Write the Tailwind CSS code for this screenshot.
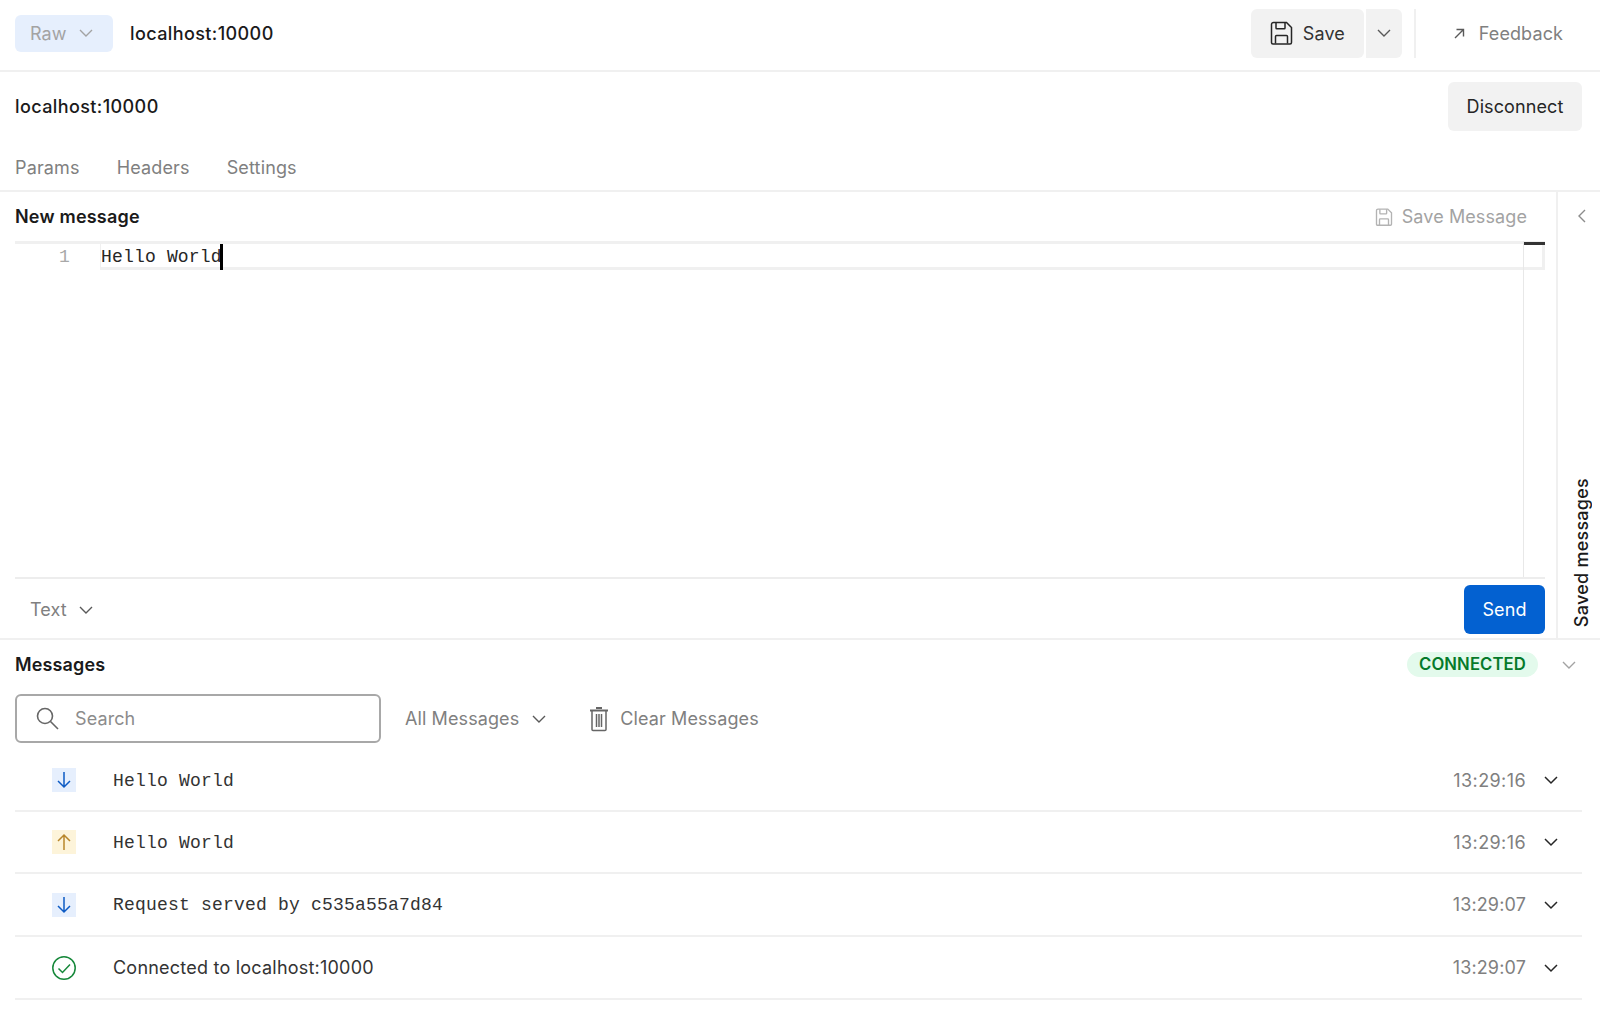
<!DOCTYPE html>
<html>
<head>
<meta charset="utf-8">
<script src="https://cdn.jsdelivr.net/npm/@tailwindcss/browser@4"></script>
</head>
<body class="bg-white">
<div class="w-[1600px] h-[1010px] overflow-hidden flex flex-col font-['Inter',sans-serif] text-[18px] tracking-[0.1px] text-[#1a1a1a]">
  <!-- top bar -->
  <header class="h-[72px] shrink-0 border-b-2 border-[#f0f0f0] flex items-center pl-[15px] pr-[37px] pb-[2px]">
    <div class="w-[98px] h-[37px] mt-[-2px] rounded-md bg-[#e6effd] flex items-center pl-[15px] gap-[11px] text-[#a3a3a3]">
      <span>Raw</span>
      <svg class="w-[16px] h-[16px]" viewBox="0 0 16 16" fill="none" stroke="#a3a3a3" stroke-width="1.4"><path d="M2 5l6 6 6-6"/></svg>
    </div>
    <span class="ml-[17px] mt-[-2px] font-medium tracking-[0.4px]">localhost:10000</span>
    <div class="ml-auto flex items-center mt-[-2px]">
      <div class="w-[113px] h-[49px] rounded-md bg-[#f2f2f2] flex items-center pl-[19px] gap-[10px]">
        <svg class="w-[23px] h-[24px]" viewBox="0 0 23 24" fill="none" stroke="#262626" stroke-width="1.5"><path d="M1.5 3.5a2 2 0 0 1 2-2h13l5 5v15a1.5 1.5 0 0 1-1.5 1.5H3a1.5 1.5 0 0 1-1.5-1.5z"/><path d="M6 1.5v5.5a.8.8 0 0 0 .8.8h7.4a.8.8 0 0 0 .8-.8V1.500"/><path d="M5.500 22.500v-7a1 1 0 0 1 1-1h10a1 1 0 0 1 1 1v7"/></svg>
        <span class="text-[#333]">Save</span>
      </div>
      <div class="ml-[2px] w-[36px] h-[49px] rounded-r-md bg-[#f2f2f2] flex items-center justify-center">
        <svg class="w-[16px] h-[16px]" viewBox="0 0 16 16" fill="none" stroke="#595959" stroke-width="1.4"><path d="M2 5l6 6 6-6"/></svg>
      </div>
      <div class="ml-[12px] w-[2px] h-[49px] bg-[#f0f0f0]"></div>
      <div class="ml-[37px] flex items-center gap-[13px] text-[#808080]">
        <svg class="w-[13px] h-[13px]" viewBox="0 0 13 13" fill="none" stroke="#595959" stroke-width="1.4"><path d="M2 11L10.500 2.500M3.500 2.500h7v7"/></svg>
        <span>Feedback</span>
      </div>
    </div>
  </header>

  <!-- url row -->
  <div class="h-[70px] shrink-0 flex items-center pl-[15px] pr-[18px] pb-[2px]">
    <span class="font-medium tracking-[0.4px]">localhost:10000</span>
    <div class="ml-auto w-[134px] h-[49px] rounded-md bg-[#f2f2f2] flex items-center justify-center text-[#262626]">Disconnect</div>
  </div>

  <!-- tabs -->
  <nav class="h-[50px] shrink-0 flex items-start pl-[15px] gap-[37px] pt-[12px] border-b-2 border-[#f0f0f0] text-[#808080] tracking-[0.15px]">
    <span>Params</span><span>Headers</span><span>Settings</span>
  </nav>

  <!-- editor and side rail -->
  <section class="h-[448px] shrink-0 flex border-b-2 border-[#f0f0f0]">
    <div class="flex-1 flex flex-col pl-[15px] pr-[11px] min-w-0">
      <div class="h-[49px] shrink-0 flex items-center justify-between">
        <span class="font-semibold tracking-[0.2px] text-[#1a1a1a]">New message</span>
        <div class="flex items-center gap-[9px] pr-[18px] text-[#a3a3a3]">
          <svg class="w-[18px] h-[18px]" viewBox="0 0 23 24" fill="none" stroke="#b3b3b3" stroke-width="1.8"><path d="M1.5 3.5a2 2 0 0 1 2-2h13l5 5v15a1.5 1.5 0 0 1-1.5 1.5H3a1.5 1.500 0 0 1-1.500-1.500z"/><path d="M6 1.500v5.500a.8.8 0 0 0 .8.8h7.400a.8.8 0 0 0 .8-.8V1.500"/><path d="M5.500 22.500v-7a1 1 0 0 1 1-1h10a1 1 0 0 1 1 1v7"/></svg>
          <span>Save Message</span>
        </div>
      </div>
      <div class="relative h-[338px] shrink-0 border-b-2 border-[#ededed]">
        <div class="h-[29px] flex border-t-[3px] border-[#f0f0f0] font-['Liberation_Mono',monospace] tracking-[0.18px]">
          <span class="w-[55px] text-right text-[#a8a8a8] leading-[26px]">1</span>
          <div class="ml-[30px] flex-1 h-[26px] border-b-[3px] border-l-[1px] border-r-[3px] border-[#f0f0f0] leading-[26px] text-[#262626] flex">
            <span>Hello World</span><span class="w-[3px] h-[26px] bg-black -ml-[2px]"></span>
          </div>
        </div>
        <div class="absolute right-[21px] top-0 bottom-0 w-[1px] bg-[#e8e8e8]"></div>
        <div class="absolute right-0 top-[1px] w-[21px] h-[3px] bg-[#333]"></div>
      </div>
      <div class="flex-1 flex items-center justify-between pt-[2px]">
        <div class="flex items-center pl-[15px] gap-[11px] text-[#808080]">
          <span>Text</span>
          <svg class="w-[16px] h-[16px]" viewBox="0 0 16 16" fill="none" stroke="#595959" stroke-width="1.4"><path d="M2 5l6 6 6-6"/></svg>
        </div>
        <div class="w-[81px] h-[49px] rounded-md bg-[#0361d1] text-white flex items-center justify-center">Send</div>
      </div>
    </div>
    <aside class="w-[44px] shrink-0 border-l-2 border-[#f0f0f0] flex flex-col items-center justify-between pl-[4px] pt-[16px] pb-[11px]">
      <svg class="w-[16px] h-[16px] ml-[2px]" viewBox="0 0 16 16" fill="none" stroke="#8c8c8c" stroke-width="1.4"><path d="M11 2L5 8l6 6"/></svg>
      <span class="[writing-mode:vertical-rl] rotate-180 font-medium tracking-[0.25px] text-[#1a1a1a]">Saved messages</span>
    </aside>
  </section>

  <!-- messages -->
  <section class="flex-1 pl-[15px] pr-[18px] min-h-0">
    <div class="h-[49px] flex items-center">
      <span class="font-semibold tracking-[0.15px] text-[#1a1a1a]">Messages</span>
      <span class="ml-auto w-[131px] h-[25px] rounded-full bg-[#e3faec] text-[#067a2a] font-semibold text-[16.7px] flex items-center justify-center">CONNECTED</span>
      <svg class="ml-[23px] mr-[5px] w-[16px] h-[16px]" viewBox="0 0 16 16" fill="none" stroke="#a3a3a3" stroke-width="1.4"><path d="M2 5l6 6 6-6"/></svg>
    </div>
    <div class="h-[61px] flex items-center pb-[2px]">
      <div class="w-[366px] h-[49px] rounded-md border-2 border-[#a8a8a8] flex items-center pl-[19px] gap-[16px] text-[#8c8c8c]">
        <svg class="w-[23px] h-[23px]" viewBox="0 0 23 23" fill="none" stroke="#666" stroke-width="1.600"><circle cx="9" cy="9" r="7.500"/><path d="M14.500 14.500l7.500 7.500"/></svg>
        <span>Search</span>
      </div>
      <div class="ml-[24px] flex items-center gap-[12px] text-[#808080]">
        <span>All Messages</span>
        <svg class="w-[16px] h-[16px]" viewBox="0 0 16 16" fill="none" stroke="#595959" stroke-width="1.400"><path d="M2 5l6 6 6-6"/></svg>
      </div>
      <div class="ml-[42px] flex items-center gap-[11px] text-[#808080]">
        <svg class="w-[20px] h-[26px]" viewBox="0 0 20 26" fill="none" stroke="#666" stroke-width="1.500"><path d="M1 4.500h18" stroke-width="2"/><path d="M7 2h6" stroke-width="2"/><path d="M3 5v18.500a1 1 0 0 0 1 1h12a1 1 0 0 0 1-1V5"/><path d="M7.500 8v13M10 8v13M12.500 8v13"/></svg>
        <span>Clear Messages</span>
      </div>
    </div>

    <div class="h-[62px] flex items-center border-b-2 border-[#f0f0f0] pl-[37px]">
      <span class="w-[24px] h-[24px] bg-[#e6effd] flex items-center justify-center"><svg class="w-[16px] h-[18px]" viewBox="0 0 16 18" fill="none" stroke="#0d5bc4" stroke-width="1.500"><path d="M8 1v15M2 10l6 6 6-6"/></svg></span>
      <span class="ml-[37px] pt-[2px] font-['Liberation_Mono',monospace] tracking-[0.2px] text-[#333]">Hello World</span>
      <span class="ml-auto text-[#808080] tracking-[0.4px]">13:29:16</span>
      <svg class="ml-[17px] mr-[23px] w-[16px] h-[16px]" viewBox="0 0 16 16" fill="none" stroke="#262626" stroke-width="1.500"><path d="M2 5l6 6 6-6"/></svg>
    </div>
    <div class="h-[62px] flex items-center border-b-2 border-[#f0f0f0] pl-[37px]">
      <span class="w-[24px] h-[24px] bg-[#fdf4da] flex items-center justify-center"><svg class="w-[16px] h-[18px]" viewBox="0 0 16 18" fill="none" stroke="#b8862b" stroke-width="1.500"><path d="M8 17V2M2 8l6-6 6 6"/></svg></span>
      <span class="ml-[37px] pt-[2px] font-['Liberation_Mono',monospace] tracking-[0.2px] text-[#333]">Hello World</span>
      <span class="ml-auto text-[#808080] tracking-[0.4px]">13:29:16</span>
      <svg class="ml-[17px] mr-[23px] w-[16px] h-[16px]" viewBox="0 0 16 16" fill="none" stroke="#262626" stroke-width="1.500"><path d="M2 5l6 6 6-6"/></svg>
    </div>
    <div class="h-[63px] flex items-center border-b-2 border-[#f0f0f0] pl-[37px]">
      <span class="w-[24px] h-[24px] bg-[#e6effd] flex items-center justify-center"><svg class="w-[16px] h-[18px]" viewBox="0 0 16 18" fill="none" stroke="#0d5bc4" stroke-width="1.500"><path d="M8 1v15M2 10l6 6 6-6"/></svg></span>
      <span class="ml-[37px] pt-[2px] font-['Liberation_Mono',monospace] tracking-[0.2px] text-[#333]">Request served by c535a55a7d84</span>
      <span class="ml-auto text-[#808080] tracking-[0.15px]">13:29:07</span>
      <svg class="ml-[17px] mr-[23px] w-[16px] h-[16px]" viewBox="0 0 16 16" fill="none" stroke="#262626" stroke-width="1.500"><path d="M2 5l6 6 6-6"/></svg>
    </div>
    <div class="h-[63px] flex items-center border-b-2 border-[#f0f0f0] pl-[37px]">
      <span class="w-[24px] h-[24px] flex items-center justify-center"><svg class="w-[24px] h-[24px]" viewBox="0 0 24 24" fill="none" stroke="#16883a" stroke-width="1.500"><circle cx="12" cy="12" r="11.200"/><path d="M6.500 12.500l4 4 7.500-8"/></svg></span>
      <span class="ml-[37px] tracking-[0.22px] text-[#333]">Connected to localhost:10000</span>
      <span class="ml-auto text-[#808080] tracking-[0.15px]">13:29:07</span>
      <svg class="ml-[17px] mr-[23px] w-[16px] h-[16px]" viewBox="0 0 16 16" fill="none" stroke="#262626" stroke-width="1.500"><path d="M2 5l6 6 6-6"/></svg>
    </div>
  </section>
</div>
</body>
</html>
